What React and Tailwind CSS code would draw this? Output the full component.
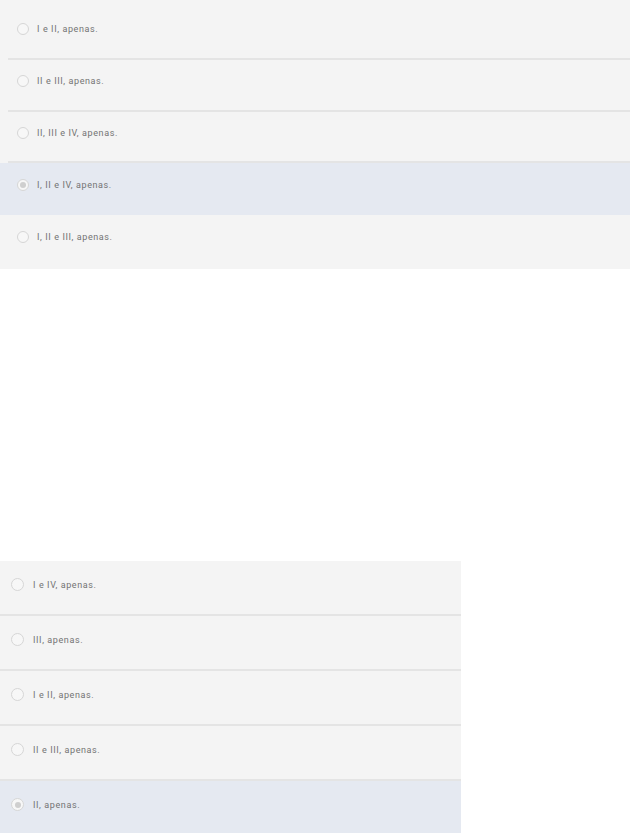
import React from "react";

function Radio({ checked, size }) {
  return (
    <span className={`${size} rounded-full border border-[#d6d6d6] bg-[#f7f7f7] flex items-center justify-center shrink-0`}>
      {checked && <span className="w-[6px] h-[6px] rounded-full bg-[#cfcfcf]" />}
    </span>
  );
}

function Row({ label, checked, h, sep, sepLeft, pl, gap, pt, size }) {
  return (
    <div className={`flex flex-col ${h} ${checked ? "bg-[#e5e9f1]" : ""}`}>
      <div className={`flex-1 flex items-start ${pl} ${pt}`}>
        <div className={`flex items-center ${gap}`}>
          <Radio checked={checked} size={size} />
          <span className="text-[9px] tracking-[0.6px] text-[#737373] leading-[12px]" style={{ fontFamily: "Roboto, 'Liberation Sans', sans-serif" }}>
            {label}
          </span>
        </div>
      </div>
      {sep && (
        <div className={sepLeft}>
          <div className="h-[2px] bg-[#e4e4e4]" />
        </div>
      )}
    </div>
  );
}

export default function App() {
  const top = [
    ["I e II, apenas.", false, "h-[60px]", "pt-[23px]", true],
    ["II e III, apenas.", false, "h-[52px]", "pt-[15px]", true],
    ["II, III e IV, apenas.", false, "h-[51px]", "pt-[15px]", true],
    ["I, II e IV, apenas.", true, "h-[52px]", "pt-[16px]", false],
    ["I, II e III, apenas.", false, "h-[54px]", "pt-[16px]", false],
  ];
  const bottom = [
    ["I e IV, apenas.", false],
    ["III, apenas.", false],
    ["I e II, apenas.", false],
    ["II e III, apenas.", false],
    ["II, apenas.", true],
  ];
  return (
    <div className="w-[630px] h-[833px] bg-white">
      <div className="bg-[#f4f4f4] w-[630px]">
        {top.map(([l, c, h, pt, sep], i) => (
          <Row
            key={i}
            label={l}
            checked={c}
            h={h}
            pt={pt}
            sep={sep}
            sepLeft="pl-[8px]"
            pl="pl-[17px]"
            gap="gap-[8px]"
            size="w-[12px] h-[12px]"
          />
        ))}
      </div>
      <div className="h-[292px]" />
      <div className="bg-[#f4f4f4] w-[461px]">
        {bottom.map(([l, c], i) => (
          <Row
            key={i}
            label={l}
            checked={c}
            h={i === 4 ? "h-[52px]" : "h-[55px]"}
            pt="pt-[17px]"
            sep={i < 4}
            sepLeft="pl-0"
            pl="pl-[11px]"
            gap="gap-[9px]"
            size="w-[13px] h-[13px]"
          />
        ))}
      </div>
    </div>
  );
}
